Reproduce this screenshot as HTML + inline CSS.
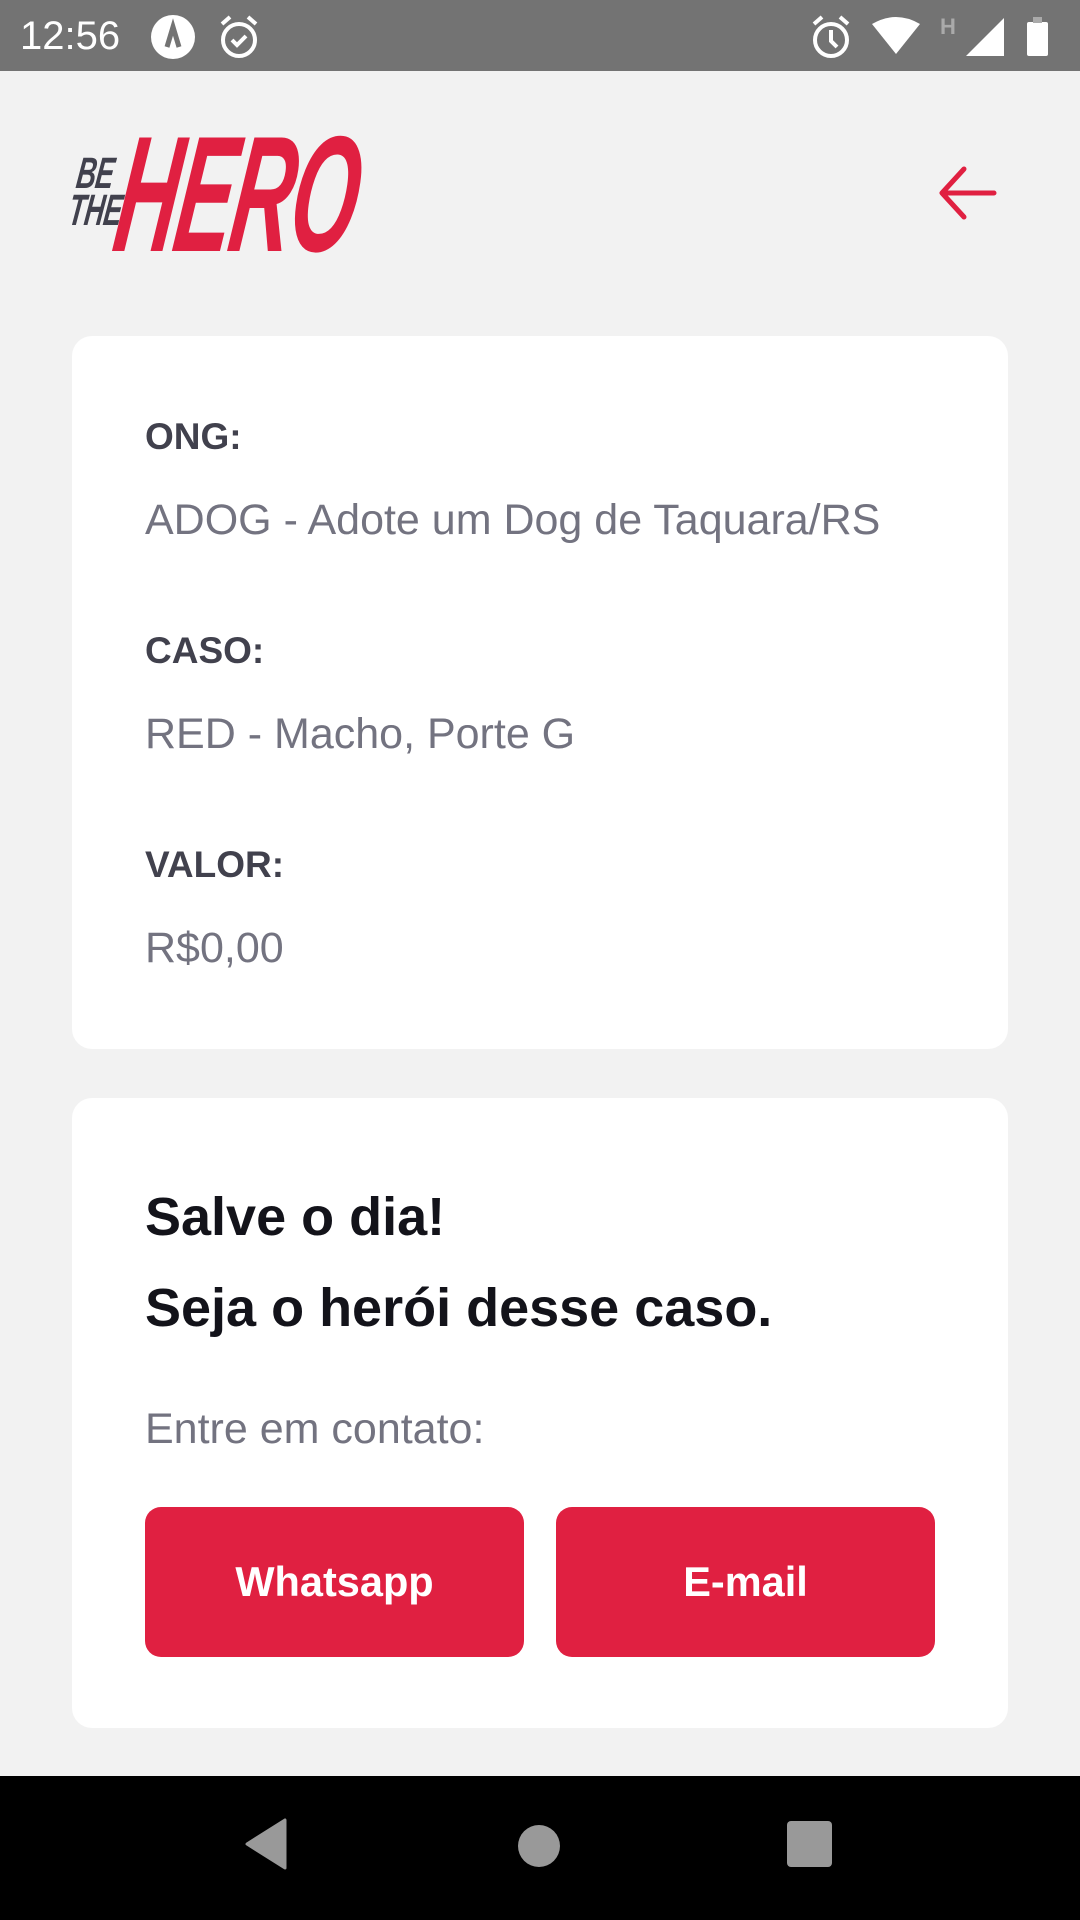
<!DOCTYPE html>
<html><head><meta charset="utf-8"><style>
*{margin:0;padding:0;box-sizing:border-box}
body{width:1080px;height:1920px;background:#f2f2f2;font-family:"Liberation Sans",Arial,sans-serif;position:relative;overflow:hidden}
.sb{position:absolute;left:0;top:0;width:1080px;height:71px;background:#737373;color:#fff}
.nav{position:absolute;left:0;top:1776px;width:1080px;height:144px;background:#000}
.card{position:absolute;left:72px;width:936px;background:#fff;border-radius:20px}
.lbl{position:absolute;left:73px;font-weight:bold;font-size:37px;color:#41414d}
.val{position:absolute;left:73px;font-size:43px;color:#737380}
.h{position:absolute;left:73px;font-weight:bold;font-size:54px;color:#13131a}
.btn{position:absolute;top:409px;width:379px;height:150px;background:#e02041;border-radius:16px;color:#fff;font-weight:bold;font-size:41.5px;text-align:center;line-height:150px}
.lg{position:absolute;font-style:italic;font-weight:bold;font-family:"Liberation Sans",sans-serif;transform-origin:left top}
</style></head><body>
<div class="sb">
<div style="position:absolute;left:20px;top:14px;font-size:40px">12:56</div>
<svg style="position:absolute;left:150px;top:14px" width="46" height="46"><circle cx="23" cy="23" r="22" fill="#fff"/><path d="M17 33 L23 13 L29 33" stroke="#737373" stroke-width="5" fill="none"/></svg>
<svg style="position:absolute;left:218px;top:14px" width="42" height="46"><circle cx="21" cy="26" r="16" stroke="#fff" stroke-width="4" fill="none"/><path d="M14 26 l5 5 l9-9" stroke="#fff" stroke-width="4" fill="none"/><path d="M4 10 l8-7 M38 10 l-8-7" stroke="#fff" stroke-width="4"/></svg>
<svg style="position:absolute;left:810px;top:14px" width="42" height="46"><circle cx="21" cy="26" r="16" stroke="#fff" stroke-width="4" fill="none"/><path d="M21 16 v11 l6 6" stroke="#fff" stroke-width="4" fill="none"/><path d="M4 10 l8-7 M38 10 l-8-7" stroke="#fff" stroke-width="4"/></svg>
<svg style="position:absolute;left:872px;top:16px" width="48" height="40"><path d="M0 8 Q24 -6 48 8 L24 38 Z" fill="#fff"/></svg>
<div style="position:absolute;left:940px;top:14px;font-size:22px;font-weight:bold;color:#aaa">H</div>
<svg style="position:absolute;left:966px;top:18px" width="38" height="38"><path d="M38 0 V38 H0 Z" fill="#fff"/></svg>
<div style="position:absolute;left:1027px;top:22px;width:21px;height:34px;background:#fff;border-radius:2px"></div>
<div style="position:absolute;left:1033px;top:17px;width:9px;height:6px;background:#aaa"></div>
</div>

<div class="lg" style="left:80px;top:152px;font-size:44px;line-height:44px;color:#41414d;transform:skewX(-8deg) scaleX(0.62);letter-spacing:-1px">BE</div>
<div class="lg" style="left:72px;top:189px;font-size:44px;line-height:44px;color:#41414d;transform:skewX(-8deg) scaleX(0.62);letter-spacing:-1px">THE</div>
<div class="lg" style="left:130px;top:112px;font-size:165px;line-height:165px;color:#e02041;transform:skewX(-8deg) scaleX(0.52);letter-spacing:-4px">HERO</div>

<svg style="position:absolute;left:934px;top:163px" width="64" height="60"><path d="M60 30 H8 M30 6 L8 30 L30 54" stroke="#e02041" stroke-width="5" fill="none" stroke-linecap="round" stroke-linejoin="round"/></svg>

<div class="card" style="top:336px;height:713px">
<div class="lbl" style="top:80px">ONG:</div>
<div class="val" style="top:160px">ADOG - Adote um Dog de Taquara/RS</div>
<div class="lbl" style="top:294px">CASO:</div>
<div class="val" style="top:374px">RED - Macho, Porte G</div>
<div class="lbl" style="top:508px">VALOR:</div>
<div class="val" style="top:588px">R$0,00</div>
</div>

<div class="card" style="top:1098px;height:630px">
<div class="h" style="top:88px">Salve o dia!</div>
<div class="h" style="top:179px">Seja o herói desse caso.</div>
<div class="val" style="top:307px">Entre em contato:</div>
<div class="btn" style="left:73px">Whatsapp</div>
<div class="btn" style="left:484px">E-mail</div>
</div>

<div class="nav">
<svg style="position:absolute;left:244px;top:42px" width="44" height="52"><path d="M41 2 V50 L3 26 Z" fill="#999" stroke="#999" stroke-width="3" stroke-linejoin="round"/></svg>
<div style="position:absolute;left:518px;top:49px;width:42px;height:42px;border-radius:50%;background:#999"></div>
<div style="position:absolute;left:787px;top:45px;width:45px;height:46px;border-radius:4px;background:#999"></div>
</div>
</body></html>
